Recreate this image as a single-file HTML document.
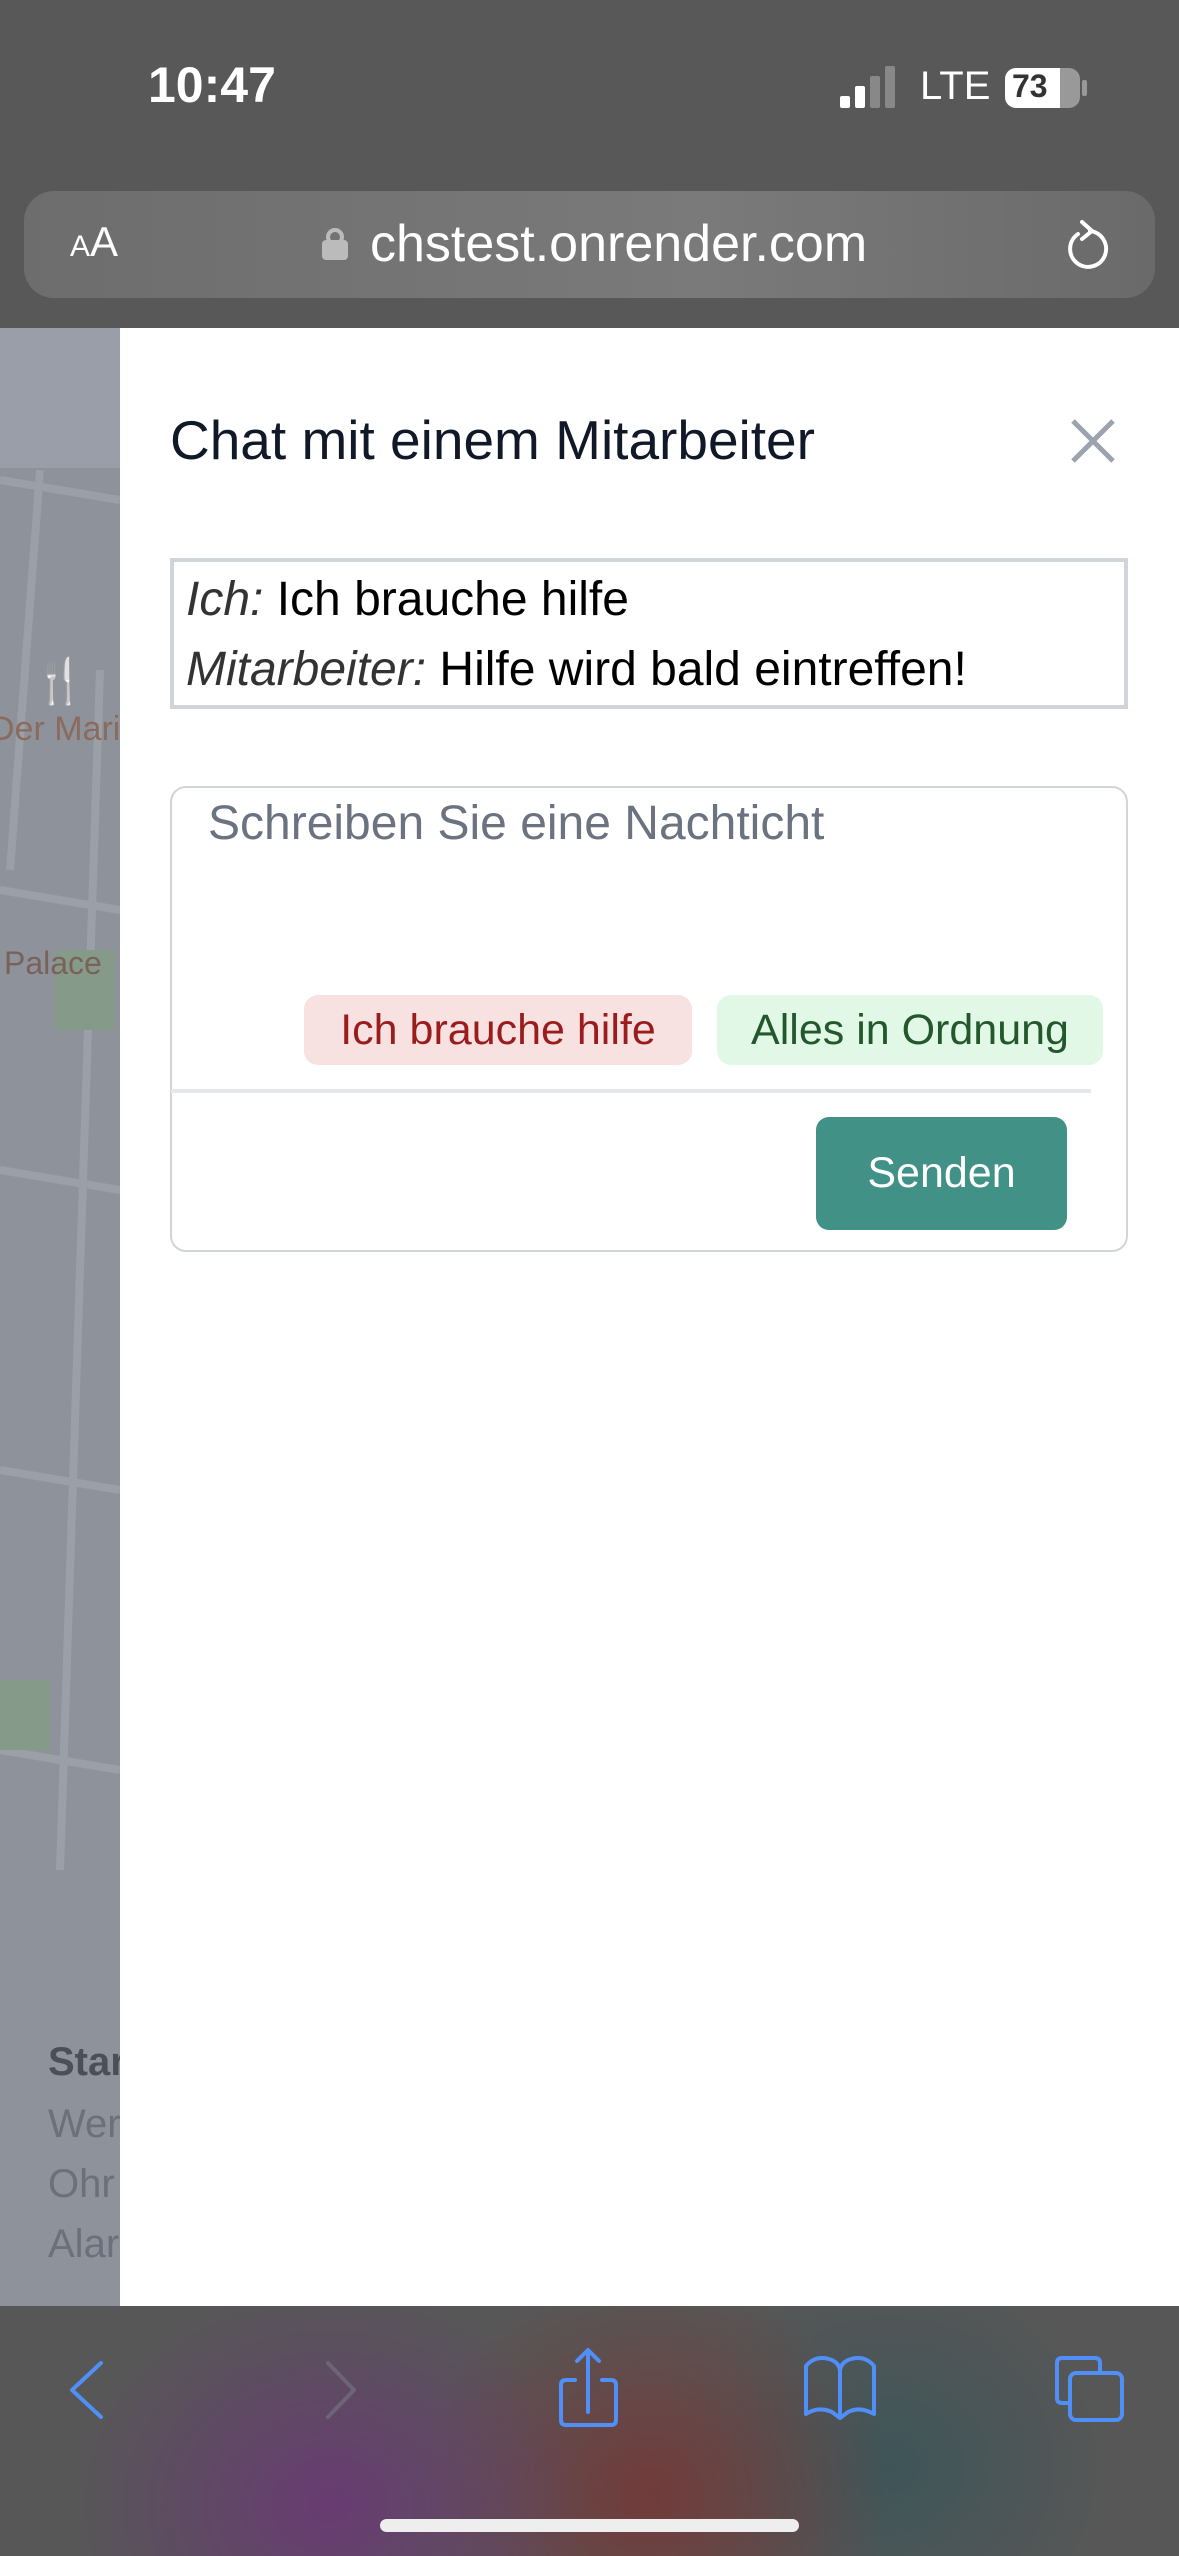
<!DOCTYPE html>
<html><head><meta charset="utf-8"><style>
*{margin:0;padding:0;box-sizing:border-box}
body{width:1179px;height:2556px;position:relative;overflow:hidden;font-family:"Liberation Sans",sans-serif;background:#fff}
.abs{position:absolute}
</style></head><body>
<div class="abs" style="left:0;top:0;width:1179px;height:328px;background:#585858"></div>
<div class="abs" style="left:148px;top:56px;font-size:50px;color:#fff;font-weight:600">10:47</div>
<div class="abs" style="left:840px;top:96px;width:10px;height:12px;background:#fff;border-radius:2px"></div>
<div class="abs" style="left:855px;top:86px;width:10px;height:22px;background:#fff;border-radius:2px"></div>
<div class="abs" style="left:870px;top:76px;width:10px;height:32px;background:#888;border-radius:2px"></div>
<div class="abs" style="left:885px;top:66px;width:10px;height:42px;background:#888;border-radius:2px"></div>
<div class="abs" style="left:920px;top:64px;font-size:40px;color:#fff;font-weight:400">LTE</div>
<div class="abs" style="left:1005px;top:68px;width:75px;height:40px;background:#999;border-radius:11px;overflow:hidden"><div style="width:55px;height:40px;background:#fff"></div></div>
<div class="abs" style="left:1012px;top:68px;font-size:32px;color:#333;font-weight:700">73</div>
<div class="abs" style="left:1082px;top:80px;width:5px;height:16px;background:#999;border-radius:2px"></div>
<div class="abs" style="left:24px;top:191px;width:1131px;height:107px;border-radius:30px;background:linear-gradient(90deg,#6d6d6d,#7a7a7a 60%,#6a6a6a)"></div>
<div class="abs" style="left:70px;top:218px;color:#fff;font-size:42px"><span style="font-size:30px">A</span>A</div>
<div class="abs" style="left:322px;top:228px;width:26px;height:32px"><div style="position:absolute;left:4px;top:0;width:18px;height:18px;border:4px solid #bbb;border-radius:9px"></div><div style="position:absolute;left:0;top:12px;width:26px;height:20px;background:#bbb;border-radius:4px"></div></div>
<div class="abs" style="left:370px;top:214px;color:#fff;font-size:52px">chstest.onrender.com</div>
<svg class="abs" style="left:1060px;top:214px" width="52" height="60" viewBox="0 0 52 60"><path d="M18 20 A18 18 0 1 0 30 17" fill="none" stroke="#fff" stroke-width="4" stroke-linecap="round"/><path d="M22 8 L32 17 L22 25" fill="none" stroke="#fff" stroke-width="4" stroke-linecap="round" stroke-linejoin="round"/></svg>
<div class="abs" style="left:0;top:328px;width:120px;height:1636px;background:#8e929b"></div>
<div class="abs" style="left:0;top:328px;width:120px;height:140px;background:#9a9ea8"></div>
<svg class="abs" style="left:0;top:470px" width="120" height="1490"><g stroke="#9ba0a8" stroke-width="8" fill="none"><path d="M0 10 L120 30"/><path d="M40 0 L10 400"/><path d="M0 420 L120 440"/><path d="M0 700 L120 720"/><path d="M0 1000 L120 1020"/><path d="M100 200 L60 1400"/><path d="M0 1280 L120 1300"/></g><rect x="55" y="480" width="60" height="80" fill="#869a8a"/><rect x="0" y="1210" width="50" height="70" fill="#869a8a"/></svg>
<div class="abs" style="left:32px;top:655px;color:#8a6b5e;font-size:44px">🍴</div>
<div class="abs" style="left:-10px;top:710px;color:#8a6b5e;font-size:34px">Der Mari</div>
<div class="abs" style="left:4px;top:945px;color:#7a6258;font-size:32px">Palace</div>
<div class="abs" style="left:0;top:1964px;width:120px;height:342px;background:#8e929b"></div>
<div class="abs" style="left:48px;top:2040px;color:#4b4f58;font-size:40px;font-weight:700">Star</div>
<div class="abs" style="left:48px;top:2102px;color:#6b707a;font-size:40px">Wer</div>
<div class="abs" style="left:48px;top:2162px;color:#6b707a;font-size:40px">Ohr</div>
<div class="abs" style="left:48px;top:2222px;color:#6b707a;font-size:40px">Alar</div>
<div class="abs" style="left:120px;top:328px;width:1059px;height:1978px;background:#fff"></div>
<div class="abs" style="left:170px;top:408px;font-size:55px;color:#111827">Chat mit einem Mitarbeiter</div>
<svg class="abs" style="left:1070px;top:418px" width="46" height="46"><path d="M3 3 L43 43 M43 3 L3 43" stroke="#9ca3af" stroke-width="5"/></svg>
<div class="abs" style="left:170px;top:558px;width:958px;height:151px;border:4px solid #d1d5db;outline:2px solid #fff;outline-offset:-8px"></div>
<div class="abs" style="left:186px;top:565px;font-size:48px;color:#000;line-height:70px"><i style="color:#333">Ich:</i> Ich brauche hilfe<br><i style="color:#333">Mitarbeiter:</i> Hilfe wird bald eintreffen!</div>
<div class="abs" style="left:170px;top:786px;width:958px;height:466px;border:2px solid #d1d5db;border-radius:16px"></div>
<div class="abs" style="left:208px;top:796px;font-size:48px;color:#6b7280">Schreiben Sie eine Nachticht</div>
<div class="abs" style="left:304px;top:995px;width:388px;height:70px;background:#f8e1e1;border-radius:14px;color:#9b1c1c;font-size:43px;line-height:70px;text-align:center">Ich brauche hilfe</div>
<div class="abs" style="left:717px;top:995px;width:386px;height:70px;background:#e1f8e7;border-radius:14px;color:#23572c;font-size:43px;line-height:70px;text-align:center">Alles in Ordnung</div>
<div class="abs" style="left:171px;top:1089px;width:920px;height:4px;background:#e5e7eb"></div>
<div class="abs" style="left:816px;top:1117px;width:251px;height:113px;background:#419186;border-radius:13px;color:#fff;font-size:43px;line-height:113px;text-align:center">Senden</div>
<div class="abs" style="left:0;top:2306px;width:1179px;height:250px;background:radial-gradient(ellipse 260px 220px at 330px 200px,#683b72,transparent),radial-gradient(ellipse 240px 220px at 650px 190px,#713b3a,transparent),radial-gradient(ellipse 220px 200px at 890px 160px,#3e5558,transparent),#575757"></div>
<svg class="abs" style="left:0;top:2330px" width="1179" height="120" fill="none" stroke-linecap="round" stroke-linejoin="round" stroke-width="4">
<path d="M101 33 L72 60 L101 87" stroke="#4f8ff7" transform="translate(0,0)"/>
<path d="M101 33 L72 60 L101 87" stroke="#4f8ff7" opacity="0"/>
<path d="M328 33 L354 60 L328 87" stroke="#6d6575"/>
<path d="M588 20 L588 82 M577 31 L588 20 L599 31" stroke="#4f8ff7"/>
<path d="M575 50 L566 50 Q561 50 561 55 L561 90 Q561 95 566 95 L611 95 Q616 95 616 90 L616 55 Q616 50 611 50 L602 50" stroke="#4f8ff7"/>
<path d="M806 84 L806 36 Q816 24 832 30 Q840 34 840 42 Q840 34 848 30 Q864 24 874 36 L874 84 Q860 76 848 82 L840 88 L832 82 Q818 76 806 84 Z M840 42 L840 88" stroke="#4f8ff7"/>
<path d="M1068 73 L1062 73 Q1057 73 1057 68 L1057 33 Q1057 28 1062 28 L1095 28 Q1100 28 1100 33 L1100 42" stroke="#4f8ff7"/>
<rect x="1070" y="43" width="52" height="47" rx="6" stroke="#4f8ff7"/>
</svg>
<div class="abs" style="left:380px;top:2519px;width:419px;height:13px;border-radius:7px;background:#eee"></div>
</body></html>
